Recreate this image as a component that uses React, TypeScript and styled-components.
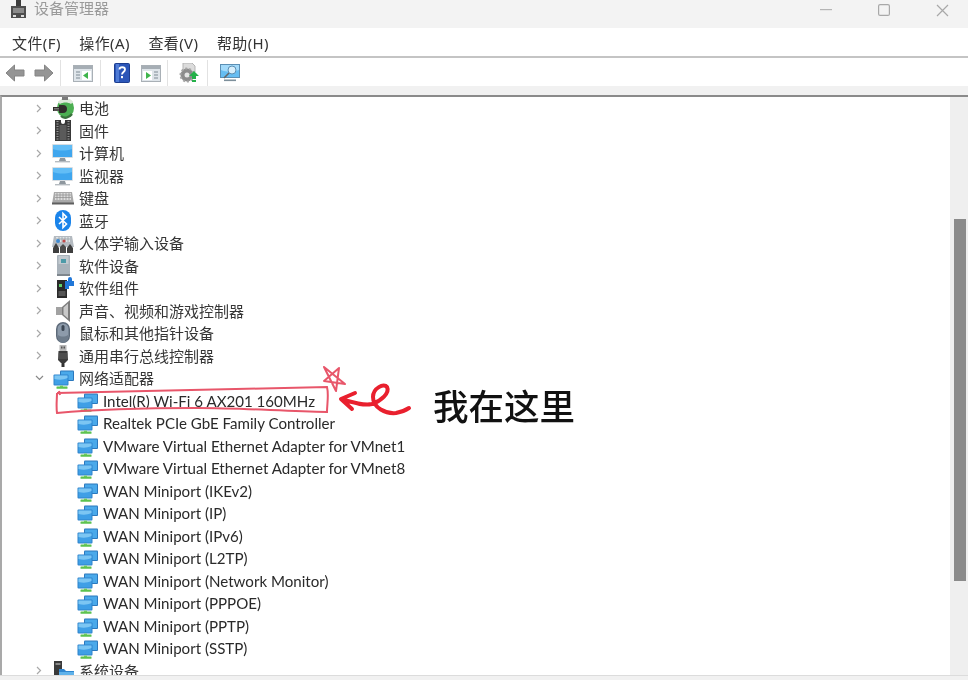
import React from "react";
import styled, { createGlobalStyle } from "styled-components";

const Global = createGlobalStyle`
  html, body { margin: 0; padding: 0; background: #fff; overflow: hidden; }
  * { box-sizing: border-box; }
`;

const FONT = `"Noto Sans", "Noto Sans CJK SC", sans-serif`;

const Page = styled.div`
  position: relative;
  width: 968px;
  height: 680px;
  overflow: hidden;
  display: flex;
  flex-direction: column;
  font-family: ${FONT};
  color: #333;
  background: #fff;
  filter: blur(0.35px);
`;

const TitleBar = styled.div`
  height: 28px;
  flex: none;
  background: #f3f3f3;
  display: flex;
  align-items: flex-start;
  padding-left: 10px;
`;
const TitleText = styled.div`
  font-size: 15px;
  line-height: 16px;
  color: #9a9a9a;
  margin-left: 7px;
`;
const WindowButtons = styled.div`
  margin-left: auto;
  display: flex;
  align-items: center;
  height: 20px;
  padding-right: 19px;
  gap: 46px;
`;

const MenuBar = styled.div`
  height: 30px;
  flex: none;
  background: #fff;
  border-bottom: 2px solid #c4c4c4;
  display: flex;
  align-items: center;
  padding: 2px 0 0 12px;
  gap: 18.5px;
`;
const MenuItem = styled.span`
  font-size: 15px;
  line-height: 26px;
  letter-spacing: 0.4px;
  color: #333;
`;

const Toolbar = styled.div`
  height: 28px;
  flex: none;
  background: #fff;
  display: flex;
  align-items: center;
  padding: 2px 0 0 5px;
`;
const ToolSlot = styled.div<{ $ml: number }>`
  margin-left: ${(p) => p.$ml}px;
  display: flex;
  align-items: center;
`;
const ToolSep = styled.div<{ $ml: number }>`
  width: 1px;
  height: 26px;
  margin-left: ${(p) => p.$ml}px;
  background: #e2e2e2;
`;
const Strip = styled.div`
  height: 9px;
  flex: none;
  background: #f1f1f1;
`;

const Main = styled.div`
  flex: 1;
  min-height: 0;
  display: flex;
  border-top: 2px solid #8a8a8a;
  border-left: 2px solid #a9a9a9;
`;
const Tree = styled.div`
  flex: 1;
  min-width: 0;
  overflow: hidden;
`;
const ScrollTrack = styled.div`
  width: 18px;
  flex: none;
  background: #efefef;
  padding: 122px 2px 0 4px;
`;
const ScrollThumb = styled.div`
  height: 362px;
  background: #8b8b8b;
`;
const BottomEdge = styled.div`
  height: 5px;
  flex: none;
  background: #f1f1f1;
  border-top: 1px solid #dcdcdc;
`;

const Row = styled.div<{ $level: number }>`
  height: 22.5px;
  display: flex;
  align-items: center;
  padding-left: ${(p) => 32 + p.$level * 24}px;
`;
const Chevron = styled.div`
  width: 10px;
  height: 10px;
  flex: none;
  display: flex;
  align-items: center;
  justify-content: center;
`;
const IconBox = styled.div`
  width: 22px;
  height: 22px;
  flex: none;
  margin-left: 8px;
`;
const Label = styled.span<{ $latin: boolean }>`
  margin-left: 5px;
  font-family: ${(p) => (p.$latin ? `Lato, "Noto Sans", sans-serif` : FONT)};
  font-size: ${(p) => (p.$latin ? "15.1px" : "15px")};
  line-height: 22px;
  white-space: nowrap;
  color: ${(p) => (p.$latin ? "#2a2a2a" : "#363636")};
`;

const Overlay = styled.svg`
  position: absolute;
  left: 0;
  top: 0;
  pointer-events: none;
`;
const Note = styled.div`
  position: absolute;
  left: 433px;
  top: 379px;
  font-family: "Noto Sans CJK SC", sans-serif;
  font-size: 35.5px;
  line-height: 52px;
  font-weight: 500;
  color: #111;
  white-space: nowrap;
`;

/* ---- icons ---- */
const Svg: React.FC<{ w?: number; h?: number; children: React.ReactNode }> = ({ w = 22, h = 22, children }) => (
  <svg width={w} height={h} viewBox={`0 0 ${w} ${h}`} style={{ display: "block" }}>
    {children}
  </svg>
);

const ChevronRight = () => (
  <svg width="6" height="9" viewBox="0 0 6 9">
    <path d="M1 1l3.500 3.500L1 8" fill="none" stroke="#a8a8a8" strokeWidth="1.2" />
  </svg>
);
const ChevronDown = () => (
  <svg width="9" height="6" viewBox="0 0 9 6">
    <path d="M1 1l3.500 3.500L8 1" fill="none" stroke="#888" strokeWidth="1.2" />
  </svg>
);

const Battery = () => (
  <Svg>
    <ellipse cx="13.500" cy="11" rx="8.500" ry="9.500" fill="#4caf52" />
    <path d="M6 5c3-4 12-5 15 0l-2 2c-3-2-8-2-11 0z" fill="#dfeadb" />
    <path d="M10 0h6v3h-6z" fill="#7a7a7a" />
    <path d="M1 10h6V8h4a3.500 3.500 0 0 1 0 8H7v-2H1z" fill="#2f2d2a" />
    <path d="M2 11.500h5M2 13h5" stroke="#8c8c8c" strokeWidth=".8" />
    <path d="M9 19c3 3 8 2 11-2" stroke="#39713c" strokeWidth="2.400" fill="none" />
  </Svg>
);
const Chip = () => (
  <Svg>
    <path d="M3 0h6v2a2 2 0 0 0 4 0V0h6v21H3z" fill="#383838" />
    <path d="M5.500 1v19M16.500 1v19" stroke="#9a9a9a" strokeWidth="2" strokeDasharray="1 1.500" />
    <rect x="7.500" y="5" width="7" height="15" fill="#5a5a5a" />
  </Svg>
);
const Monitor = () => (
  <Svg>
    <rect x="0" y="2" width="21" height="14" rx="1" fill="#d7dde2" />
    <rect x="1" y="3" width="19" height="12" fill="#3fa6ee" />
    <path d="M1 3h19v4C14 9 7 9 1 7z" fill="#62bdf6" />
    <path d="M8 16h5l1 3H7z" fill="#8e979e" />
    <rect x="3" y="19" width="15" height="1.400" fill="#b6bcc1" />
  </Svg>
);
const Keyboard = () => (
  <Svg>
    <path d="M2 5h18l2 12H0z" fill="#a9a9a9" />
    <path d="M3 6h16v7H3z" fill="#dcdcdc" />
    <path d="M3 8h16M3 10.500h16M5 6v7M8 6v7M11 6v7M14 6v7M17 6v7" stroke="#8d8d8d" strokeWidth=".7" />
    <rect x="0" y="15.500" width="22" height="2" fill="#5f5f5f" />
  </Svg>
);
const Bluetooth = () => (
  <Svg>
    <rect x="3" y="0" width="16" height="21" rx="8" fill="#1b84ea" />
    <path d="M7 7l7.500 7L11 17.500v-14L14.500 7 7 14" fill="none" stroke="#fff" strokeWidth="1.600" />
  </Svg>
);
const Hid = () => (
  <Svg>
    <path d="M2 4h18l2 11H0z" fill="#b4bac0" />
    <path d="M4 5h14v5H4z" fill="#dfe3e6" />
    <path d="M4 7h14M7 5v5M10 5v5M13 5v5M16 5v5" stroke="#90989f" strokeWidth=".7" />
    <path d="M1 21v-5l3-5 3 5v5z" fill="#3e3e3e" />
    <path d="M8 21v-6l3-3 3 3v6z" fill="#4c4c4c" />
    <path d="M15 21v-5l3-4 3 4v5z" fill="#3e3e3e" />
    <circle cx="6" cy="9" r="2" fill="#3f8ad0" />
    <circle cx="12" cy="9" r="1.600" fill="#c24a4a" />
  </Svg>
);
const SoftDevice = () => (
  <Svg>
    <rect x="5" y="0" width="13" height="21" rx="1" fill="#a9b2ba" />
    <rect x="6.500" y="1" width="10" height="8" fill="#c2cad0" />
    <rect x="9" y="4" width="5" height="4" fill="#4d9aa8" />
    <rect x="5" y="19" width="13" height="2" fill="#7e868d" />
  </Svg>
);
const SoftComp = () => (
  <Svg>
    <rect x="5" y="3" width="10" height="18" fill="#2a2a2a" />
    <rect x="7" y="7" width="3" height="3" fill="#5fd06a" />
    <rect x="6.500" y="14" width="7" height="5" fill="#555" />
    <path d="M13 4h3V2a2 2 0 0 1 4 0v2h3v5h-6v3h-4z" fill="#2177d8" />
  </Svg>
);
const Speaker = () => (
  <Svg>
    <rect x="4" y="7" width="7" height="8" fill="#a2a2a2" />
    <path d="M10 7l8-7v22l-8-7z" fill="#7c7c7c" />
    <path d="M11.500 7.500l4.500-4v15l-4.500-4z" fill="#c9c9c9" />
  </Svg>
);
const Mouse = () => (
  <Svg>
    <rect x="4" y="0" width="14" height="21" rx="7" fill="#5d6a79" />
    <rect x="5.500" y="1.500" width="11" height="18" rx="5.500" fill="#8d9bab" />
    <rect x="9.500" y="3" width="3" height="6" rx="1.500" fill="#3c4754" />
    <path d="M6 13c3 2 7 2 10 0v3a5 5 0 0 1-10 0z" fill="#6e7c8b" />
  </Svg>
);
const Usb = () => (
  <Svg>
    <rect x="7.500" y="0" width="7" height="6" fill="#b6b6b6" />
    <path d="M9 1.500h1.500v2H9zM11.500 1.500H13v2h-1.500z" fill="#555" />
    <path d="M6.500 6h9l.5 9-3 3H9l-3-3z" fill="#3b3b3b" />
    <path d="M6.500 9h9M6.500 11h9M6.500 13h9" stroke="#6a6a6a" strokeWidth=".8" />
    <rect x="9.500" y="18" width="3" height="4" fill="#333" />
  </Svg>
);
const Network = () => (
  <Svg>
    <rect x="8" y="3.500" width="14" height="10.500" rx="1" fill="#2b78bd" />
    <rect x="9" y="4.500" width="12" height="8.500" fill="#4aa9ea" />
    <rect x="1.500" y="7.500" width="15" height="11" rx="1" fill="#2f83cb" />
    <rect x="2.500" y="8.500" width="13" height="9" fill="#3f9fe6" />
    <path d="M2.500 8.500h13v2.500C11 13 7 13 2.500 12z" fill="#7cc6f3" />
    <path d="M8 18.500h3V20H8z" fill="#7fd070" />
    <rect x="4.500" y="19.500" width="11" height="2.200" rx=".5" fill="#5cc24f" />
  </Svg>
);
const SystemDev = () => (
  <Svg>
    <rect x="2" y="1" width="8" height="18" fill="#3a3a3a" />
    <rect x="3.500" y="3" width="5" height="2" fill="#888" />
    <path d="M7 9h5l2 2h8v9H7z" fill="#2f86cf" />
    <path d="M7 12h15v3H7z" fill="#5fb2ea" />
  </Svg>
);

const ArrowLeft = () => (
  <Svg w={20} h={20}>
    <path d="M1 10l8.500-8v5H19v6H9.500v5z" fill="#959595" stroke="#858585" />
  </Svg>
);
const ArrowRight = () => (
  <Svg w={20} h={20}>
    <path d="M19 10l-8.500-8v5H1v6h9.500v5z" fill="#959595" stroke="#858585" />
  </Svg>
);
const PanelLeft = () => (
  <Svg w={20} h={17}>
    <rect x="0.500" y="0.500" width="19" height="16" fill="#dfe5ea" stroke="#a9b0b6" />
    <rect x="1" y="1" width="18" height="3" fill="#a6aeb5" />
    <path d="M3 7h4M3 10h4M3 13h4" stroke="#7f8b95" />
    <rect x="9" y="6" width="9" height="9" fill="#fff" />
    <path d="M15 7v7l-5-3.500z" fill="#3fb44c" />
  </Svg>
);
const PanelRight = () => (
  <Svg w={20} h={17}>
    <rect x="0.500" y="0.500" width="19" height="16" fill="#dfe5ea" stroke="#a9b0b6" />
    <rect x="1" y="1" width="18" height="3" fill="#a6aeb5" />
    <path d="M13 7h4M13 10h4M13 13h4" stroke="#7f8b95" />
    <rect x="2" y="6" width="9" height="9" fill="#fff" />
    <path d="M5 7v7l5-3.500z" fill="#3fb44c" />
  </Svg>
);
const Help = () => (
  <svg width="16" height="20" viewBox="0 0 16 20" style={{ display: "block" }}>
    <rect x="0.500" y="0.500" width="15" height="19" rx="1" fill="#2b56b8" stroke="#1c3d8f" />
    <path d="M2 1h3v18H2z" fill="#4f7bd6" />
    <path d="M5.500 6.500C5.500 3.500 11 3.500 11 6.500c0 2.500-3 2.500-3 5" fill="none" stroke="#fff" strokeWidth="1.800" />
    <rect x="7" y="13" width="2" height="2.200" fill="#fff" />
  </svg>
);
const GearDoc = () => (
  <Svg w={20} h={20}>
    <path d="M4 0h9l3 3v6H4z" fill="#dcdcdc" stroke="#b4b4b4" />
    <circle cx="8" cy="12" r="6.500" fill="#8c8c8c" />
    <circle cx="8" cy="12" r="6.500" fill="none" stroke="#a6a6a6" strokeWidth="2" strokeDasharray="2 2" />
    <circle cx="8" cy="12" r="2.500" fill="#e4e4e4" />
    <path d="M15 8l5 5h-3v3h-4v-3h-3z" fill="#25b14a" />
    <rect x="13" y="17" width="4" height="2" fill="#25b14a" />
  </Svg>
);
const ScanMonitor = () => (
  <Svg w={20} h={18}>
    <rect x="0.500" y="0.500" width="19" height="13" fill="#65bdf2" stroke="#5b8fb4" />
    <path d="M1 1h18v5C13 8 6 8 1 6z" fill="#a3dafa" />
    <circle cx="12" cy="6" r="4" fill="#d7eefb" stroke="#5b8fb4" />
    <path d="M9 9l-5 5" stroke="#666" strokeWidth="1.600" />
    <rect x="4" y="15.500" width="12" height="1.600" fill="#7d8f9b" />
  </Svg>
);

const DeviceMark = () => (
  <svg width="17" height="18" viewBox="0 0 17 18" style={{ display: "block", flex: "none" }}>
    <path d="M6 0h5v6H6z" fill="#3d3d3d" />
    <path d="M1 6h15v12H1z" fill="#4e4e4e" />
    <path d="M3 8h11v5H3z" fill="#8b8b8b" />
    <rect x="3" y="15" width="3" height="2" fill="#ddd" />
    <rect x="11" y="15" width="3" height="2" fill="#ddd" />
  </svg>
);

type Item = { label: string; icon: React.FC; level?: number; open?: boolean };

const ITEMS: Item[] = [
  { label: "电池", icon: Battery },
  { label: "固件", icon: Chip },
  { label: "计算机", icon: Monitor },
  { label: "监视器", icon: Monitor },
  { label: "键盘", icon: Keyboard },
  { label: "蓝牙", icon: Bluetooth },
  { label: "人体学输入设备", icon: Hid },
  { label: "软件设备", icon: SoftDevice },
  { label: "软件组件", icon: SoftComp },
  { label: "声音、视频和游戏控制器", icon: Speaker },
  { label: "鼠标和其他指针设备", icon: Mouse },
  { label: "通用串行总线控制器", icon: Usb },
  { label: "网络适配器", icon: Network, open: true },
  { label: "Intel(R) Wi-Fi 6 AX201 160MHz", icon: Network, level: 1 },
  { label: "Realtek PCIe GbE Family Controller", icon: Network, level: 1 },
  { label: "VMware Virtual Ethernet Adapter for VMnet1", icon: Network, level: 1 },
  { label: "VMware Virtual Ethernet Adapter for VMnet8", icon: Network, level: 1 },
  { label: "WAN Miniport (IKEv2)", icon: Network, level: 1 },
  { label: "WAN Miniport (IP)", icon: Network, level: 1 },
  { label: "WAN Miniport (IPv6)", icon: Network, level: 1 },
  { label: "WAN Miniport (L2TP)", icon: Network, level: 1 },
  { label: "WAN Miniport (Network Monitor)", icon: Network, level: 1 },
  { label: "WAN Miniport (PPPOE)", icon: Network, level: 1 },
  { label: "WAN Miniport (PPTP)", icon: Network, level: 1 },
  { label: "WAN Miniport (SSTP)", icon: Network, level: 1 },
  { label: "系统设备", icon: SystemDev },
];

export default function App() {
  return (
    <Page>
      <Global />
      <TitleBar>
        <DeviceMark />
        <TitleText>设备管理器</TitleText>
        <WindowButtons>
          <svg width="12" height="2" viewBox="0 0 12 2">
            <rect width="12" height="1.200" fill="#b5b5b5" />
          </svg>
          <svg width="12" height="12" viewBox="0 0 12 12">
            <rect x="0.600" y="0.600" width="10.800" height="10.800" rx="1.500" fill="none" stroke="#a8a8a8" strokeWidth="1.200" />
          </svg>
          <svg width="13" height="13" viewBox="0 0 13 13">
            <path d="M1 1l11 11M12 1L1 12" stroke="#a8a8a8" strokeWidth="1.200" />
          </svg>
        </WindowButtons>
      </TitleBar>
      <MenuBar>
        <MenuItem>文件(F)</MenuItem>
        <MenuItem>操作(A)</MenuItem>
        <MenuItem>查看(V)</MenuItem>
        <MenuItem>帮助(H)</MenuItem>
      </MenuBar>
      <Toolbar>
        <ToolSlot $ml={0}><ArrowLeft /></ToolSlot>
        <ToolSlot $ml={9}><ArrowRight /></ToolSlot>
        <ToolSep $ml={6} />
        <ToolSlot $ml={12}><PanelLeft /></ToolSlot>
        <ToolSep $ml={7} />
        <ToolSlot $ml={13}><Help /></ToolSlot>
        <ToolSlot $ml={11}><PanelRight /></ToolSlot>
        <ToolSep $ml={6} />
        <ToolSlot $ml={11}><GearDoc /></ToolSlot>
        <ToolSep $ml={8} />
        <ToolSlot $ml={12}><ScanMonitor /></ToolSlot>
      </Toolbar>
      <Strip />
      <Main>
        <Tree>
          {ITEMS.map((it) => {
            const Icon = it.icon;
            return (
              <Row key={it.label} $level={it.level ?? 0}>
                <Chevron>
                  {it.level ? null : it.open ? <ChevronDown /> : <ChevronRight />}
                </Chevron>
                <IconBox>
                  <Icon />
                </IconBox>
                <Label $latin={!!it.level}>{it.label}</Label>
              </Row>
            );
          })}
        </Tree>
        <ScrollTrack>
          <ScrollThumb />
        </ScrollTrack>
      </Main>
      <BottomEdge />
      <Overlay width="968" height="680" viewBox="0 0 968 680">
        <path
          d="M57 393C120 392 230 389 327 387C329 395 327 404 327 412C280 411 240 408 197 408C150 408 100 409 57 413C56 406 57 399 57 393M59 391l1 4"
          fill="none"
          stroke="#e8566a"
          strokeWidth="2"
        />
        <path
          d="M324 367L345 384L324 381L339 368L336 391Z"
          fill="none"
          stroke="#e8566a"
          strokeWidth="2"
          strokeLinejoin="round"
        />
        <path
          d="M355 393L341 399L352 409M341 399C352 402 362 406 372 404C381 401 390 393 387 387C384 383 373 388 373 397C373 408 386 414 396 413C401 412 406 410 409 408"
          fill="none"
          stroke="#e9202e"
          strokeWidth="4"
          strokeLinecap="round"
          strokeLinejoin="round"
        />
      </Overlay>
      <Note>我在这里</Note>
    </Page>
  );
}
